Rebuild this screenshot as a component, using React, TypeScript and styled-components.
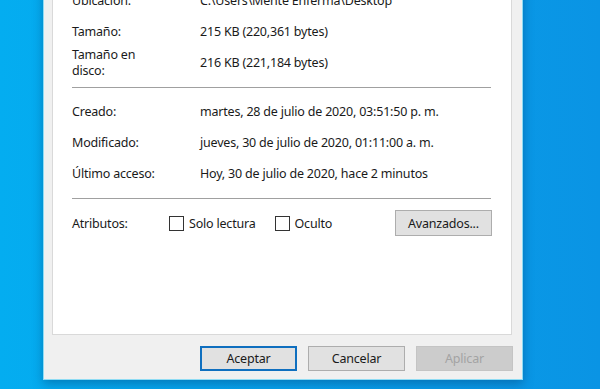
import React from 'react';
import styled, { createGlobalStyle } from 'styled-components';

const GlobalStyle = createGlobalStyle`
    html, body {
        margin: 0;
        padding: 0;
    }
    body {
        font-family: 'Noto Sans', 'Open Sans', 'DejaVu Sans', sans-serif;
        font-size: 12.5px;
        letter-spacing: -0.2px;
        color: #1a1a1a;
    }
`;

const Desktop = styled.div`
    width: 600px;
    height: 389px;
    overflow: hidden;
    background: linear-gradient(90deg, #04adf0 0%, #08a2ec 45%, #0a94e4 100%);
    display: flex;
    flex-direction: column;
    justify-content: flex-end;
    padding: 0 0 9px 43px;
    box-sizing: border-box;
`;

const Dialog = styled.div`
    width: 480px;
    flex-shrink: 0;
    box-sizing: border-box;
    background: #f0f0f0;
    border: 1px solid #8fdcf4;
    box-shadow: 0 4px 10px rgba(0, 40, 90, 0.35);
    padding: 0 9px 8px 8px;
    display: flex;
    flex-direction: column;
    gap: 11px;
`;

const Panel = styled.div`
    width: 460px;
    box-sizing: border-box;
    background: #ffffff;
    border: 1px solid #d9d9d9;
    border-top: none;
    padding: 0 19px 98px 19px;
    display: flex;
    flex-direction: column;
`;

const Row = styled.div<{ $h?: number }>`
    display: grid;
    grid-template-columns: 128px 1fr;
    align-items: center;
    height: ${p => p.$h ?? 31}px;
    line-height: 16px;
    white-space: nowrap;
`;

const Label = styled.span``;

const Value = styled.span``;

const Separator = styled.hr<{ $above: number; $below: number }>`
    border: none;
    height: 1px;
    background: #a0a0a0;
    margin: ${p => p.$above}px 1px ${p => p.$below}px 0;
`;

const AttrRow = styled.div`
    display: flex;
    align-items: center;
    height: 26px;
`;

const AttrLabel = styled.span`
    width: 97px;
`;

const Check = styled.label`
    display: flex;
    align-items: center;
    gap: 5px;
    margin-right: 19px;
`;

const Box = styled.span`
    width: 13px;
    height: 13px;
    border: 1px solid #333333;
    background: #ffffff;
`;

const Spacer = styled.div`
    flex: 1;
`;

const Button = styled.button<{ $variant?: 'default' | 'normal' | 'disabled' }>`
    width: 97px;
    height: ${p => (p.$variant ? 25 : 26)}px;
    box-sizing: border-box;
    font-family: inherit;
    font-size: 12.5px;
    letter-spacing: -0.2px;
    padding: 0;
    color: ${p => (p.$variant === 'disabled' ? '#a3a3a3' : '#1a1a1a')};
    background: ${p => (p.$variant === 'disabled' ? '#cccccc' : '#e1e1e1')};
    border: ${p =>
        p.$variant === 'default'
            ? '2px solid #0f6fbf'
            : p.$variant === 'disabled'
              ? '1px solid #c4c4c4'
              : '1px solid #adadad'};
`;

const ButtonBar = styled.div`
    display: flex;
    justify-content: flex-end;
    gap: 11px;
`;

const rowsTop = [
    ['Ubicación:', 'C:\\Users\\Mente Enferma\\Desktop'],
    ['Tamaño:', '215 KB (220,361 bytes)'],
];

const rowsDates = [
    ['Creado:', 'martes, 28 de julio de 2020, 03:51:50 p. m.'],
    ['Modificado:', 'jueves, 30 de julio de 2020, 01:11:00 a. m.'],
    ['Último acceso:', 'Hoy, 30 de julio de 2020, hace 2 minutos'],
];

const App = () => {
    return (
        <>
            <GlobalStyle />
            <Desktop>
                <Dialog>
                    <Panel>
                        {rowsTop.map(([l, v]) => (
                            <Row key={l}>
                                <Label>{l}</Label>
                                <Value>{v}</Value>
                            </Row>
                        ))}
                        <Row $h={32}>
                            <Label>
                                Tamaño en
                                <br />
                                disco:
                            </Label>
                            <Value>216 KB (221,184 bytes)</Value>
                        </Row>
                        <Separator $above={8} $below={8} />
                        {rowsDates.map(([l, v]) => (
                            <Row key={l}>
                                <Label>{l}</Label>
                                <Value>{v}</Value>
                            </Row>
                        ))}
                        <Separator $above={9} $below={11} />
                        <AttrRow>
                            <AttrLabel>Atributos:</AttrLabel>
                            <Check>
                                <Box />
                                Solo lectura
                            </Check>
                            <Check>
                                <Box />
                                Oculto
                            </Check>
                            <Spacer />
                            <Button>Avanzados...</Button>
                        </AttrRow>
                    </Panel>
                    <ButtonBar>
                        <Button $variant="default">Aceptar</Button>
                        <Button $variant="normal">Cancelar</Button>
                        <Button $variant="disabled">Aplicar</Button>
                    </ButtonBar>
                </Dialog>
            </Desktop>
        </>
    );
};

export default App;
